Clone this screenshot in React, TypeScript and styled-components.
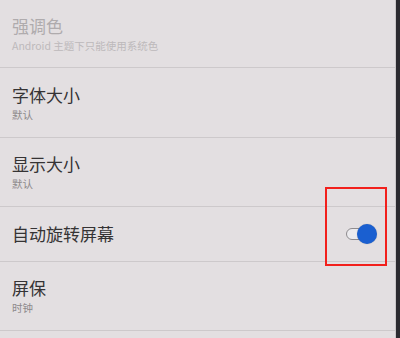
import React from "react";
import styled, { createGlobalStyle } from "styled-components";

const Global = createGlobalStyle`
  html, body { margin: 0; padding: 0; background: #e3dfe1; }
  body { font-family: "Noto Sans CJK SC", "Noto Sans", sans-serif; }
`;

const Screen = styled.div`
  display: flex;
  width: 400px;
  height: 338px;
  overflow: hidden;
  background: #e3dfe1;
`;

const List = styled.div`
  flex: 1;
  display: flex;
  flex-direction: column;
`;

const Edge = styled.div`
  width: 4px;
  background: #2b2a30;
  border-left: 1px solid #c9c6c8;
`;

const Row = styled.div<{ $h: number }>`
  height: ${(p) => p.$h}px;
  flex-shrink: 0;
  display: flex;
  align-items: center;
  justify-content: space-between;
  padding: 0 18px 0 12px;
  border-bottom: 1px solid #cdc9cb;
  box-sizing: border-box;
`;

const Texts = styled.div`
  display: flex;
  flex-direction: column;
`;

const Title = styled.div<{ $disabled?: boolean }>`
  font-size: 17px;
  line-height: 22px;
  color: ${(p) => (p.$disabled ? "#afabad" : "#353334")};
`;

const Sub = styled.div<{ $disabled?: boolean }>`
  font-size: 10.5px;
  line-height: 14px;
  margin-top: 2px;
  color: ${(p) => (p.$disabled ? "#bdb9bb" : "#8d898b")};
`;

const Toggle = styled.div`
  position: relative;
  width: 31px;
  height: 20px;
  display: flex;
  align-items: center;
`;

const Track = styled.div`
  width: 24px;
  height: 12px;
  border: 1.5px solid #8e8b8e;
  border-radius: 8px;
  background: #ecebee;
  box-sizing: border-box;
`;

const Knob = styled.div`
  position: absolute;
  right: 0;
  top: 0;
  width: 20px;
  height: 20px;
  border-radius: 50%;
  background: #1a5fd0;
  box-shadow: 0 0 1px rgba(0, 0, 0, 0.3);
`;

const Highlight = styled.div`
  position: absolute;
  top: -37px;
  bottom: -22px;
  left: -21px;
  right: -10px;
  border: 2.5px solid #f2201c;
  pointer-events: none;
`;

export default function App() {
  return (
    <>
      <Global />
      <Screen>
        <List>
          <Row $h={68}>
            <Texts>
              <Title $disabled>强调色</Title>
              <Sub $disabled>Android 主题下只能使用系统色</Sub>
            </Texts>
          </Row>
          <Row $h={70}>
            <Texts>
              <Title>字体大小</Title>
              <Sub>默认</Sub>
            </Texts>
          </Row>
          <Row $h={69}>
            <Texts>
              <Title>显示大小</Title>
              <Sub>默认</Sub>
            </Texts>
          </Row>
          <Row $h={55}>
            <Texts>
              <Title>自动旋转屏幕</Title>
            </Texts>
            <Toggle>
              <Track />
              <Knob />
              <Highlight />
            </Toggle>
          </Row>
          <Row $h={69}>
            <Texts>
              <Title>屏保</Title>
              <Sub>时钟</Sub>
            </Texts>
          </Row>
        </List>
        <Edge />
      </Screen>
    </>
  );
}
